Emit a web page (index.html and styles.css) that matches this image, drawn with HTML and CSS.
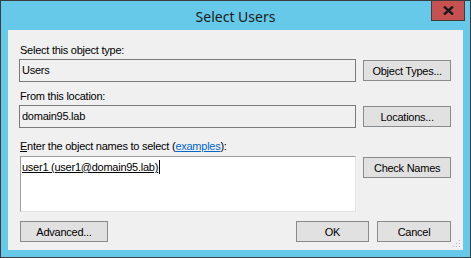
FILE: index.html
```html
<!DOCTYPE html>
<html>
<head>
<meta charset="utf-8">
<link rel="stylesheet" href="styles.css">
</head>
<body>
<div class="window">
  <div class="titlebar">
    <span class="title">Select Users</span>
    <button class="close" aria-label="Close">
      <svg width="11" height="9" viewBox="0 0 11 9"><path d="M1 0.5 L10 8.5 M10 0.5 L1 8.5" stroke="#1a1a1a" stroke-width="2.4"/></svg>
    </button>
  </div>
  <div class="client">
    <div class="label l1">Select this object type:</div>
    <div class="row">
      <div class="field">Users</div>
      <button class="btn side">Object Types...</button>
    </div>
    <div class="label l2">From this location:</div>
    <div class="row">
      <div class="field">domain95.lab</div>
      <button class="btn side">Locations...</button>
    </div>
    <div class="label l3"><u>E</u>nter the object names to select (<a class="link">examples</a>):</div>
    <div class="row top">
      <div class="names"><span class="entry">user1 (user1@domain95.lab)</span><span class="caret"></span></div>
      <button class="btn side">Check Names</button>
    </div>
    <div class="footer">
      <button class="btn adv">Advanced...</button>
      <div class="spacer"></div>
      <button class="btn ok">OK</button>
      <button class="btn cancel">Cancel</button>
    </div>
    <svg class="grip" width="9" height="9" viewBox="0 0 9 9">
      <g fill="#b4b4b4">
        <rect x="7" y="1" width="1" height="1"/>
        <rect x="4" y="4" width="1" height="1"/><rect x="7" y="4" width="1" height="1"/>
        <rect x="1" y="7" width="1" height="1"/><rect x="4" y="7" width="1" height="1"/><rect x="7" y="7" width="1" height="1"/>
      </g>
      <g fill="#ffffff">
        <rect x="8" y="2" width="1" height="1"/>
        <rect x="5" y="5" width="1" height="1"/><rect x="8" y="5" width="1" height="1"/>
        <rect x="2" y="8" width="1" height="1"/><rect x="5" y="8" width="1" height="1"/><rect x="8" y="8" width="1" height="1"/>
      </g>
    </svg>
  </div>
</div>
</body>
</html>
```
FILE: styles.css
```css
html, body { margin: 0; padding: 0; background: #ffffff; }
body { font-family: "Liberation Sans", Arial, sans-serif; }

.window {
  position: relative;
  box-sizing: border-box;
  width: 471px;
  height: 258px;
  border: 1px solid #3c3c3c;
  background: #66c9e9;
  padding: 0 7px 7px 7px;
  display: flex;
  flex-direction: column;
}

.titlebar {
  height: 29px;
  display: flex;
  align-items: center;
  justify-content: center;
}
.title {
  font-family: "Noto Sans", "Open Sans", sans-serif;
  font-size: 14px;
  color: #1b1b1b;
  margin-top: 1px;
}
.close {
  position: absolute;
  top: -1px;
  right: 5px;
  width: 34px;
  height: 21px;
  box-sizing: border-box;
  border: 1px solid #3c3c3c;
  background: #c75050;
  padding: 0;
  display: flex;
  align-items: center;
  justify-content: center;
}

.client {
  position: relative;
  flex: 1;
  background: #f0f0f0;
  padding: 0 12px 0 11px;
  font-size: 11px;
  letter-spacing: -0.25px;
  color: #000;
}

.label {
  height: 14px;
  line-height: 14px;
  padding-left: 1px;
}
.l1 { margin-top: 13px; margin-bottom: 2px; }
.l2 { margin-top: 7px; margin-bottom: 2px; }
.l3 { margin-top: 11px; margin-bottom: 3px; }

.link { color: #0066cc; text-decoration: underline; }

.row {
  display: flex;
  align-items: center;
  gap: 6px;
}
.row.top { align-items: flex-start; }

.field {
  box-sizing: border-box;
  width: 338px;
  height: 23px;
  border: 1px solid #7a7a7a;
  background: #f0f0f0;
  line-height: 21px;
  padding-left: 2px;
}

.names {
  box-sizing: border-box;
  width: 337px;
  height: 56px;
  margin-left: 1px;
  border-top: 1px solid #a0a0a0;
  border-left: 1px solid #a0a0a0;
  border-right: 1px solid #e3e3e3;
  border-bottom: 1px solid #e3e3e3;
  background: #ffffff;
  padding: 3px 0 0 1px;
  line-height: 14px;
}
.entry { text-decoration: underline; }
.caret {
  display: inline-block;
  width: 1px;
  height: 14px;
  background: #000;
  vertical-align: top;
  margin-left: 1px;
}

.btn {
  box-sizing: border-box;
  height: 21px;
  border: 1px solid #8a8a8a;
  background: #e1e1e1;
  font-family: "Liberation Sans", Arial, sans-serif;
  font-size: 11px;
  letter-spacing: -0.25px;
  color: #000;
  padding: 0;
  margin: 0;
}
.side { width: 88px; margin-left: 1px; }
.row.top .side { margin-top: 1px; }

.footer {
  display: flex;
  margin-top: 9px;
  gap: 8px;
}
.spacer { flex: 1; }
.adv { width: 88px; margin-left: 1px; }
.ok { width: 73px; }
.cancel { width: 74px; }

.grip {
  position: absolute;
  right: 2px;
  bottom: 2px;
}
```
